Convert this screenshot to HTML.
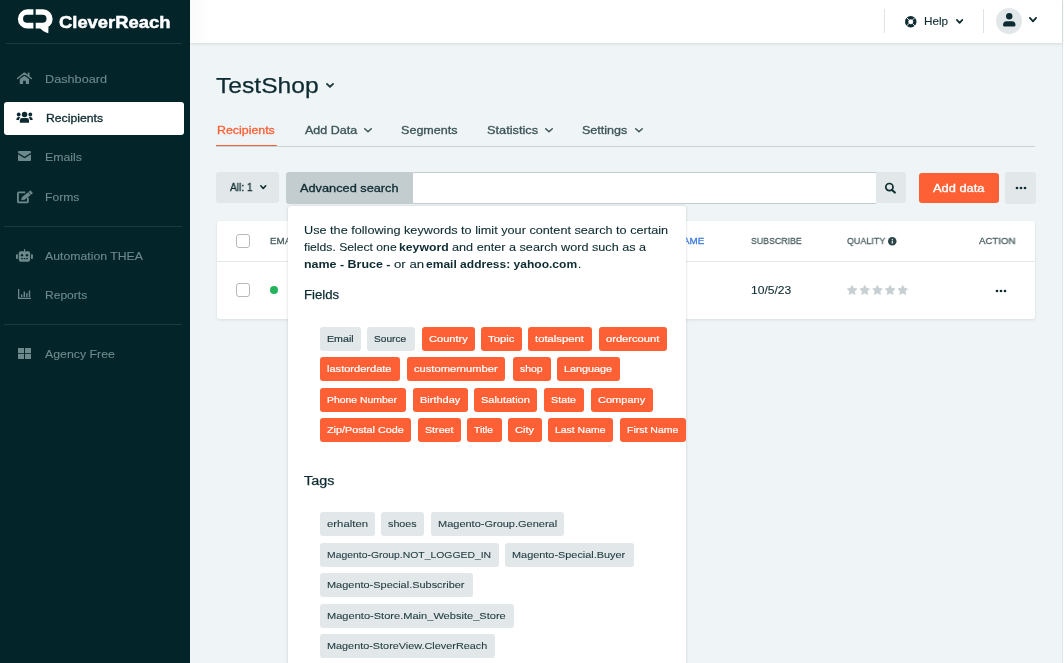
<!DOCTYPE html>
<html><head><meta charset="utf-8"><style>
html,body{margin:0;padding:0;width:1064px;height:663px;overflow:hidden;background:#eff4f6;}
body{position:relative;font-family:"Liberation Sans",sans-serif;}
.t{position:absolute;white-space:nowrap;line-height:1;transform-origin:0 0;will-change:transform;}
.r{position:absolute;}
</style></head><body>
<div class="r" style="left:0px;top:0px;width:190px;height:663px;background:#03252a;"></div>
<div class="r" style="left:6px;top:43px;width:176px;height:1px;background:#1d3a40;"></div>
<div class="r" style="left:4px;top:226px;width:178px;height:1px;background:#1d3a40;"></div>
<div class="r" style="left:4px;top:324px;width:178px;height:1px;background:#1d3a40;"></div>
<div class="r" style="left:4px;top:102px;width:180px;height:33px;background:#fff;border-radius:3px;"></div>
<svg class="r" style="left:0;top:0" width="60" height="40" viewBox="0 0 60 40">
<path fill="#fff" fill-rule="evenodd" d="M27.5 9.3 H43 A9.6 9.6 0 0 1 43 28.6 H27.5 A9.6 9.6 0 0 1 27.5 9.3 Z M27 14.8 H42.6 A3.95 3.95 0 0 1 42.6 22.7 H27 A3.95 3.95 0 0 1 27 14.8Z"/>
<rect x="33.4" y="8" width="2.3" height="22" fill="#03252a"/>
<path fill="#fff" d="M39.5 27.5 L48.5 27 L48.3 33.2 Q44 32.5 39.5 27.5Z"/>
</svg>
<div class="t" style="left:58.60px;top:14.00px;font-size:17px;font-weight:bold;color:#fff;transform:scaleX(1.0818);-webkit-text-stroke:0.5px #fff;">CleverReach</div>
<div class="t" style="left:45.30px;top:74.00px;font-size:11px;font-weight:normal;color:#6e898c;transform:scaleX(1.1527);-webkit-text-stroke:0.1px #6e898c;">Dashboard</div>
<div class="t" style="left:45.30px;top:152.00px;font-size:11px;font-weight:normal;color:#6e898c;transform:scaleX(1.1187);-webkit-text-stroke:0.1px #6e898c;">Emails</div>
<div class="t" style="left:45.30px;top:192.00px;font-size:11px;font-weight:normal;color:#6e898c;transform:scaleX(1.1041);-webkit-text-stroke:0.1px #6e898c;">Forms</div>
<div class="t" style="left:45.30px;top:251.00px;font-size:11px;font-weight:normal;color:#6e898c;transform:scaleX(1.1150);-webkit-text-stroke:0.1px #6e898c;">Automation THEA</div>
<div class="t" style="left:45.30px;top:290.00px;font-size:11px;font-weight:normal;color:#6e898c;transform:scaleX(1.0956);-webkit-text-stroke:0.1px #6e898c;">Reports</div>
<div class="t" style="left:45.30px;top:349.00px;font-size:11px;font-weight:normal;color:#6e898c;transform:scaleX(1.1199);-webkit-text-stroke:0.1px #6e898c;">Agency Free</div>
<div class="t" style="left:45.50px;top:113.00px;font-size:11px;font-weight:normal;color:#0d2b31;transform:scaleX(1.1103);-webkit-text-stroke:0.3px #0d2b31;">Recipients</div>
<div class="r" style="left:190px;top:0px;width:872px;height:663px;background:#eff4f6;"></div>
<div class="r" style="left:1062px;top:0px;width:1px;height:663px;background:#dfe5e8;"></div>
<div class="r" style="left:1063px;top:0px;width:1px;height:663px;background:#fff;"></div>
<div class="r" style="left:190px;top:0px;width:872px;height:43px;background:#fff;box-shadow:0 1px 3px rgba(0,30,40,.12);"></div>
<div class="r" style="left:190px;top:0px;width:22px;height:43px;background:linear-gradient(90deg,rgba(0,20,30,.025),rgba(0,20,30,0));"></div>
<div class="r" style="left:884px;top:9px;width:1px;height:24px;background:#dde3e6;"></div>
<div class="r" style="left:983px;top:9px;width:1px;height:24px;background:#dde3e6;"></div>
<div class="t" style="left:924.40px;top:16.00px;font-size:11px;font-weight:normal;color:#0d2b31;transform:scaleX(1.0661);-webkit-text-stroke:0.1px #0d2b31;">Help</div>
<div class="r" style="left:996px;top:7.75px;width:26px;height:26px;background:#e2e8ea;border-radius:50%;"></div>
<div class="t" style="left:215.90px;top:75.00px;font-size:22px;font-weight:normal;color:#0d2b31;transform:scaleX(1.1189);-webkit-text-stroke:0.25px #0d2b31;">TestShop</div>
<div class="r" style="left:216px;top:146px;width:819px;height:1px;background:#c9d2d5;"></div>
<div class="r" style="left:216px;top:145px;width:61px;height:1px;background:#fe6036;"></div>
<div class="t" style="left:217.00px;top:125.00px;font-size:11px;font-weight:normal;color:#fe6036;transform:scaleX(1.1257);-webkit-text-stroke:0.3px #fe6036;">Recipients</div>
<div class="t" style="left:304.80px;top:125.00px;font-size:11px;font-weight:normal;color:#3c5458;transform:scaleX(1.1370);-webkit-text-stroke:0.3px #3c5458;">Add Data</div>
<div class="t" style="left:401.10px;top:125.00px;font-size:11px;font-weight:normal;color:#3c5458;transform:scaleX(1.1429);-webkit-text-stroke:0.3px #3c5458;">Segments</div>
<div class="t" style="left:487.30px;top:125.00px;font-size:11px;font-weight:normal;color:#3c5458;transform:scaleX(1.1611);-webkit-text-stroke:0.3px #3c5458;">Statistics</div>
<div class="t" style="left:582.20px;top:125.00px;font-size:11px;font-weight:normal;color:#3c5458;transform:scaleX(1.1385);-webkit-text-stroke:0.3px #3c5458;">Settings</div>
<div class="r" style="left:216px;top:172px;width:63px;height:31px;background:#e2e8ea;border-radius:3px;"></div>
<div class="t" style="left:229.50px;top:182.00px;font-size:11px;font-weight:normal;color:#0d2b31;transform:scaleX(0.9283);-webkit-text-stroke:0.3px #0d2b31;">All: 1</div>
<div class="r" style="left:286px;top:172px;width:127px;height:32px;background:#c3cccf;border-radius:3px 0 0 3px;"></div>
<div class="t" style="left:299.90px;top:183.00px;font-size:11px;font-weight:normal;color:#0d2b31;transform:scaleX(1.1594);-webkit-text-stroke:0.3px #0d2b31;">Advanced search</div>
<div class="r" style="left:413px;top:172px;width:463px;height:32px;background:#fff;border-top:1px solid #c3cccf;border-bottom:1px solid #c3cccf;box-sizing:border-box;"></div>
<div class="r" style="left:876px;top:172px;width:30px;height:31px;background:#e2e8ea;border-radius:0 3px 3px 0;"></div>
<div class="r" style="left:919px;top:173px;width:80px;height:30px;background:#fe6036;border-radius:3px;"></div>
<div class="t" style="left:932.50px;top:183.00px;font-size:11px;font-weight:normal;color:#fff;transform:scaleX(1.1678);-webkit-text-stroke:0.3px #fff;">Add data</div>
<div class="r" style="left:1005px;top:172px;width:31px;height:32px;background:#e2e8ea;border-radius:3px;"></div>
<div class="r" style="left:217px;top:221px;width:818px;height:98px;background:#fff;box-shadow:0 1px 3px rgba(0,30,40,.10);border-radius:2px;"></div>
<div class="r" style="left:217px;top:261px;width:818px;height:1px;background:#e3e8ea;"></div>
<div class="r" style="left:236px;top:234px;width:14px;height:14px;background:#fff;border:1px solid #b5b9bb;border-radius:3px;box-sizing:border-box;"></div>
<div class="r" style="left:236px;top:283px;width:14px;height:14px;background:#fff;border:1px solid #b5b9bb;border-radius:3px;box-sizing:border-box;"></div>
<div class="r" style="left:269.5px;top:285.8px;width:8.3px;height:8.3px;background:#22b35b;border-radius:50%;"></div>
<div class="t" style="left:269.50px;top:236.00px;font-size:9.8px;font-weight:normal;color:#4a5f63;transform:scaleX(1.0000);-webkit-text-stroke:0.3px #4a5f63;">EMAIL</div>
<div class="t" style="left:676.00px;top:236.00px;font-size:9.8px;font-weight:normal;color:#3b7ddd;transform:scaleX(1.0000);-webkit-text-stroke:0.3px #3b7ddd;">NAME</div>
<div class="t" style="left:750.95px;top:236.00px;font-size:9.8px;font-weight:normal;color:#4a5f63;transform:scaleX(0.8968);-webkit-text-stroke:0.3px #4a5f63;">SUBSCRIBE</div>
<div class="t" style="left:846.70px;top:236.00px;font-size:9.8px;font-weight:normal;color:#4a5f63;transform:scaleX(0.9113);-webkit-text-stroke:0.3px #4a5f63;">QUALITY</div>
<div class="t" style="left:979.30px;top:236.00px;font-size:9.8px;font-weight:normal;color:#4a5f63;transform:scaleX(0.9837);-webkit-text-stroke:0.3px #4a5f63;">ACTION</div>
<div class="t" style="left:750.90px;top:285.00px;font-size:11.5px;font-weight:normal;color:#0d2b31;transform:scaleX(1.0491);-webkit-text-stroke:0.1px #0d2b31;">10/5/23</div>
<svg class="r" style="left:17px;top:72px;overflow:visible" width="15" height="12" viewBox="0 0 15 12"><path d="M0.5 6.5 L7.4 1.1 L14.4 6.5" fill="none" stroke="#6e898c" stroke-width="1.4" stroke-linecap="round" stroke-linejoin="round"/><rect x="10.8" y="0.6" width="1.7" height="3.6" fill="#6e898c"/><path fill="#6e898c" d="M2.8 6.9 L7.4 3.7 L12.06 6.9 V11.9 H8.8 V8.7 H6.1 V11.9 H2.8 Z"/></svg>
<svg class="r" style="left:16px;top:111px;overflow:visible" width="17" height="12" viewBox="0 0 17 12"><g fill="#0d2b31"><circle cx="8.55" cy="3.4" r="2.75"/><path d="M3.9 11.8 V9.3 Q3.9 7.05 6.1 7.05 H10.8 Q13 7.05 13 9.3 V11.8 Z"/><circle cx="2.7" cy="3.5" r="1.9"/><circle cx="14.3" cy="3.5" r="1.9"/><path d="M0.3 9 Q0.4 6.1 2.8 6.1 L4.4 6.3 Q3.1 7.4 3 9 Z"/><path d="M16.7 9 Q16.6 6.1 14.2 6.1 L12.6 6.3 Q13.9 7.4 14 9 Z"/></g></svg>
<svg class="r" style="left:18px;top:151px;overflow:visible" width="13" height="10" viewBox="0 0 13 10"><path fill="#6e898c" d="M1.2 0 H11.8 Q13 0 13 1.2 V1.8 L6.5 5.8 L0 1.8 V1.2 Q0 0 1.2 0Z M0 3.2 L6.5 7.2 L13 3.2 V8.8 Q13 10 11.8 10 H1.2 Q0 10 0 8.8Z"/></svg>
<svg class="r" style="left:17px;top:189.5px;overflow:visible" width="15" height="14" viewBox="0 0 15 14"><path d="M8.2 2.4 H1.9 Q0.9 2.4 0.9 3.4 V11.4 Q0.9 12.4 1.9 12.4 H9.9 Q10.9 12.4 10.9 11.4 V7.6" fill="none" stroke="#6e898c" stroke-width="1.8"/><path fill="#6e898c" stroke="#6e898c" stroke-width="0.3" stroke-linejoin="round" d="M4.30 9.90 L7.43 9.69 L15.67 3.28 L13.53 0.52 L5.28 6.92Z"/><path d="M13.80 5.11 L11.29 1.88" stroke="#03252a" stroke-width="0.6"/></svg>
<svg class="r" style="left:16px;top:249px;overflow:visible" width="17" height="13" viewBox="0 0 17 13"><g fill="#6e898c"><rect x="2.8" y="2.2" width="11.3" height="10.5" rx="2"/><rect x="8" y="0" width="1" height="2.5"/><rect x="0" y="5.3" width="1.9" height="4.6" rx="0.6"/><rect x="15" y="5.3" width="1.9" height="4.6" rx="0.6"/></g><g fill="#03252a"><circle cx="6" cy="6.3" r="1.2"/><circle cx="11" cy="6.3" r="1.2"/><rect x="5.2" y="9" width="1.6" height="1.2"/><rect x="7.7" y="9" width="1.6" height="1.2"/><rect x="10.2" y="9" width="1.6" height="1.2"/></g></svg>
<svg class="r" style="left:18px;top:289px;overflow:visible" width="13" height="10" viewBox="0 0 13 10"><g fill="#6e898c"><rect x="0" y="0" width="1.3" height="10"/><rect x="0" y="8.7" width="13" height="1.3"/><rect x="3" y="5.5" width="1.4" height="2.5"/><rect x="5.6" y="2.5" width="1.4" height="5.5"/><rect x="8.2" y="4" width="1.4" height="4"/><rect x="10.8" y="1.5" width="1.4" height="6.5"/></g></svg>
<svg class="r" style="left:18px;top:348px;overflow:visible" width="13" height="11" viewBox="0 0 13 11"><g fill="#6e898c"><rect x="0" y="0" width="6" height="5.2"/><rect x="7" y="0" width="6" height="5.2"/><rect x="0" y="6" width="6" height="5"/><rect x="7" y="6" width="6" height="5"/></g></svg>
<svg class="r" style="left:905px;top:16px;overflow:visible" width="11.5" height="11.5" viewBox="0 0 11.5 11.5"><circle cx="5.75" cy="5.75" r="4.0" fill="none" stroke="#0d2b31" stroke-width="3.5"/><circle cx="5.75" cy="5.75" r="2.1" fill="none" stroke="#fff" stroke-width="0.6"/><g stroke="#fff" stroke-width="0.9"><path d="M1.6 1.6 L4.0 4.0 M9.9 1.6 L7.5 4.0 M1.6 9.9 L4.0 7.5 M9.9 9.9 L7.5 7.5"/></g></svg>
<svg class="r" style="left:955px;top:17.5px;overflow:visible" width="9.200000000000045" height="6.699999999999999" viewBox="0 0 9.200000000000045 6.699999999999999"><path d="M1.85 1.85 L4.600000000000023 4.85 L7.350000000000046 1.85" fill="none" stroke="#0d2b31" stroke-width="1.7" stroke-linecap="round" stroke-linejoin="round"/></svg>
<svg class="r" style="left:1003px;top:12.5px;overflow:visible" width="12.5" height="13.5" viewBox="0 0 12.5 13.5"><g fill="#0d2b31"><circle cx="6.25" cy="3.3" r="3.2"/><path d="M0 12 Q0 8.2 3.5 8.2 H9 Q12.5 8.2 12.5 12 Q12.5 13.5 11 13.5 H1.5 Q0 13.5 0 12Z"/></g></svg>
<svg class="r" style="left:1027.5px;top:15.600000000000001px;overflow:visible" width="10.0" height="7.199999999999999" viewBox="0 0 10.0 7.199999999999999"><path d="M1.9 1.9 L5.0 5.299999999999999 L8.1 1.9" fill="none" stroke="#0d2b31" stroke-width="1.8" stroke-linecap="round" stroke-linejoin="round"/></svg>
<svg class="r" style="left:325px;top:82px;overflow:visible" width="10" height="6.900000000000006" viewBox="0 0 10 6.900000000000006"><path d="M1.95 1.95 L5.0 4.9500000000000055 L8.05 1.95" fill="none" stroke="#1f3b40" stroke-width="1.9" stroke-linecap="round" stroke-linejoin="round"/></svg>
<svg class="r" style="left:363px;top:127px;overflow:visible" width="10" height="6.5" viewBox="0 0 10 6.5"><path d="M1.75 1.75 L5.0 4.75 L8.25 1.75" fill="none" stroke="#3c5458" stroke-width="1.5" stroke-linecap="round" stroke-linejoin="round"/></svg>
<svg class="r" style="left:544px;top:127px;overflow:visible" width="10" height="6.5" viewBox="0 0 10 6.5"><path d="M1.75 1.75 L5.0 4.75 L8.25 1.75" fill="none" stroke="#3c5458" stroke-width="1.5" stroke-linecap="round" stroke-linejoin="round"/></svg>
<svg class="r" style="left:633.5px;top:127px;overflow:visible" width="10.0" height="6.5" viewBox="0 0 10.0 6.5"><path d="M1.75 1.75 L5.0 4.75 L8.25 1.75" fill="none" stroke="#3c5458" stroke-width="1.5" stroke-linecap="round" stroke-linejoin="round"/></svg>
<svg class="r" style="left:258.5px;top:183.5px;overflow:visible" width="8.5" height="6.300000000000011" viewBox="0 0 8.5 6.300000000000011"><path d="M1.8 1.8 L4.25 4.5000000000000115 L6.7 1.8" fill="none" stroke="#0d2b31" stroke-width="1.6" stroke-linecap="round" stroke-linejoin="round"/></svg>
<svg class="r" style="left:885px;top:182.5px;overflow:visible" width="11" height="10.5" viewBox="0 0 11 10.5"><circle cx="4.4" cy="4.1" r="3.6" fill="none" stroke="#0d2b31" stroke-width="1.7"/><path d="M7 6.9 L9.9 9.6" stroke="#0d2b31" stroke-width="2" stroke-linecap="round"/></svg>
<svg class="r" style="left:1014.7px;top:185.8px;overflow:visible" width="12" height="4" viewBox="0 0 12 4"><circle cx="2" cy="2" r="1.35" fill="#0d2b31"/><circle cx="6" cy="2" r="1.35" fill="#0d2b31"/><circle cx="10" cy="2" r="1.35" fill="#0d2b31"/></svg>
<svg class="r" style="left:995px;top:288.5px;overflow:visible" width="12" height="4" viewBox="0 0 12 4"><circle cx="2" cy="2" r="1.35" fill="#0d2b31"/><circle cx="6" cy="2" r="1.35" fill="#0d2b31"/><circle cx="10" cy="2" r="1.35" fill="#0d2b31"/></svg>
<svg class="r" style="left:847px;top:285px;overflow:visible" width="62" height="10" viewBox="0 0 62 10"><path fill="#c6cfd1" stroke="#c6cfd1" stroke-width="0.8" stroke-linejoin="round" d="M5.10 0.40 L6.60 3.34 L9.86 3.85 L7.53 6.19 L8.04 9.45 L5.10 7.95 L2.16 9.45 L2.67 6.19 L0.34 3.85 L3.60 3.34Z"/><path fill="#c6cfd1" stroke="#c6cfd1" stroke-width="0.8" stroke-linejoin="round" d="M17.77 0.40 L19.27 3.34 L22.53 3.85 L20.20 6.19 L20.71 9.45 L17.77 7.95 L14.83 9.45 L15.34 6.19 L13.01 3.85 L16.27 3.34Z"/><path fill="#c6cfd1" stroke="#c6cfd1" stroke-width="0.8" stroke-linejoin="round" d="M30.44 0.40 L31.94 3.34 L35.20 3.85 L32.87 6.19 L33.38 9.45 L30.44 7.95 L27.50 9.45 L28.01 6.19 L25.68 3.85 L28.94 3.34Z"/><path fill="#c6cfd1" stroke="#c6cfd1" stroke-width="0.8" stroke-linejoin="round" d="M43.11 0.40 L44.61 3.34 L47.87 3.85 L45.54 6.19 L46.05 9.45 L43.11 7.95 L40.17 9.45 L40.68 6.19 L38.35 3.85 L41.61 3.34Z"/><path fill="#c6cfd1" stroke="#c6cfd1" stroke-width="0.8" stroke-linejoin="round" d="M55.78 0.40 L57.28 3.34 L60.54 3.85 L58.21 6.19 L58.72 9.45 L55.78 7.95 L52.84 9.45 L53.35 6.19 L51.02 3.85 L54.28 3.34Z"/></svg>
<svg class="r" style="left:888.3px;top:236.6px;overflow:visible" width="8.5" height="8.5" viewBox="0 0 8.5 8.5"><circle cx="4.25" cy="4.25" r="4.25" fill="#2c4448"/><rect x="3.75" y="3.6" width="1.1" height="3" fill="#fff"/><circle cx="4.3" cy="2.3" r="0.65" fill="#fff"/></svg>
<div class="r" style="left:288px;top:206px;width:398px;height:470px;background:#fff;border-radius:3px;box-shadow:0 0 3px rgba(0,30,40,.18);"></div>
<div class="t" style="left:303.50px;top:225.00px;font-size:11.2px;font-weight:normal;color:#0d2b31;transform:scaleX(1.1328);-webkit-text-stroke:0.1px #0d2b31;">Use the following keywords to limit your content search to certain</div>
<div class="t" style="left:303.90px;top:242.00px;font-size:11.2px;font-weight:normal;color:#0d2b31;transform:scaleX(1.0874);-webkit-text-stroke:0.1px #0d2b31;">fields. Select one</div>
<div class="t" style="left:399.40px;top:242.00px;font-size:11.2px;font-weight:bold;color:#0d2b31;transform:scaleX(1.0940);">keyword</div>
<div class="t" style="left:451.70px;top:242.00px;font-size:11.2px;font-weight:normal;color:#0d2b31;transform:scaleX(1.1310);-webkit-text-stroke:0.1px #0d2b31;">and enter a search word such as a</div>
<div class="t" style="left:303.90px;top:259.00px;font-size:11.2px;font-weight:bold;color:#0d2b31;transform:scaleX(1.1133);">name - Bruce -</div>
<div class="t" style="left:393.70px;top:259.00px;font-size:11.2px;font-weight:normal;color:#0d2b31;transform:scaleX(1.1822);-webkit-text-stroke:0.1px #0d2b31;">or an</div>
<div class="t" style="left:425.70px;top:259.00px;font-size:11.2px;font-weight:bold;color:#0d2b31;transform:scaleX(1.0753);">email address: yahoo.com</div>
<div class="t" style="left:578.20px;top:259.00px;font-size:11.2px;font-weight:normal;color:#0d2b31;transform:scaleX(1.0000);-webkit-text-stroke:0.1px #0d2b31;">.</div>
<div class="t" style="left:304.20px;top:289.00px;font-size:12.5px;font-weight:normal;color:#0d2b31;transform:scaleX(1.0534);-webkit-text-stroke:0.25px #0d2b31;">Fields</div>
<div class="t" style="left:303.80px;top:475.00px;font-size:12.5px;font-weight:normal;color:#0d2b31;transform:scaleX(1.1498);-webkit-text-stroke:0.25px #0d2b31;">Tags</div>
<div class="r" style="left:320px;top:327px;width:41px;height:24px;background:#e2e8ea;border-radius:3px;"></div>
<div class="t" style="left:326.80px;top:334.00px;font-size:9.8px;font-weight:normal;color:#1f3a3f;transform:scaleX(1.0886);-webkit-text-stroke:0.2px #1f3a3f;">Email</div>
<div class="r" style="left:367px;top:327px;width:48px;height:24px;background:#e2e8ea;border-radius:3px;"></div>
<div class="t" style="left:373.80px;top:334.00px;font-size:9.8px;font-weight:normal;color:#1f3a3f;transform:scaleX(1.0347);-webkit-text-stroke:0.2px #1f3a3f;">Source</div>
<div class="r" style="left:422px;top:327px;width:53px;height:24px;background:#fe6036;border-radius:3px;"></div>
<div class="t" style="left:428.60px;top:334.00px;font-size:9.8px;font-weight:normal;color:#fff;transform:scaleX(1.1306);-webkit-text-stroke:0.2px #fff;">Country</div>
<div class="r" style="left:481px;top:327px;width:41px;height:24px;background:#fe6036;border-radius:3px;"></div>
<div class="t" style="left:487.60px;top:334.00px;font-size:9.8px;font-weight:normal;color:#fff;transform:scaleX(1.1498);-webkit-text-stroke:0.2px #fff;">Topic</div>
<div class="r" style="left:528px;top:327px;width:64px;height:24px;background:#fe6036;border-radius:3px;"></div>
<div class="t" style="left:534.60px;top:334.00px;font-size:9.8px;font-weight:normal;color:#fff;transform:scaleX(1.1522);-webkit-text-stroke:0.2px #fff;">totalspent</div>
<div class="r" style="left:599px;top:327px;width:68px;height:24px;background:#fe6036;border-radius:3px;"></div>
<div class="t" style="left:605.50px;top:334.00px;font-size:9.8px;font-weight:normal;color:#fff;transform:scaleX(1.1370);-webkit-text-stroke:0.2px #fff;">ordercount</div>
<div class="r" style="left:320px;top:357px;width:80px;height:24px;background:#fe6036;border-radius:3px;"></div>
<div class="t" style="left:326.80px;top:364.00px;font-size:9.8px;font-weight:normal;color:#fff;transform:scaleX(1.1282);-webkit-text-stroke:0.2px #fff;">lastorderdate</div>
<div class="r" style="left:407px;top:357px;width:98px;height:24px;background:#fe6036;border-radius:3px;"></div>
<div class="t" style="left:413.60px;top:364.00px;font-size:9.8px;font-weight:normal;color:#fff;transform:scaleX(1.1384);-webkit-text-stroke:0.2px #fff;">customernumber</div>
<div class="r" style="left:513px;top:357px;width:38px;height:24px;background:#fe6036;border-radius:3px;"></div>
<div class="t" style="left:519.50px;top:364.00px;font-size:9.8px;font-weight:normal;color:#fff;transform:scaleX(1.0645);-webkit-text-stroke:0.2px #fff;">shop</div>
<div class="r" style="left:557px;top:357px;width:63px;height:24px;background:#fe6036;border-radius:3px;"></div>
<div class="t" style="left:563.50px;top:364.00px;font-size:9.8px;font-weight:normal;color:#fff;transform:scaleX(1.1007);-webkit-text-stroke:0.2px #fff;">Language</div>
<div class="r" style="left:320px;top:388px;width:86px;height:24px;background:#fe6036;border-radius:3px;"></div>
<div class="t" style="left:326.80px;top:395.00px;font-size:9.8px;font-weight:normal;color:#fff;transform:scaleX(1.0630);-webkit-text-stroke:0.2px #fff;">Phone Number</div>
<div class="r" style="left:413px;top:388px;width:55px;height:24px;background:#fe6036;border-radius:3px;"></div>
<div class="t" style="left:419.70px;top:395.00px;font-size:9.8px;font-weight:normal;color:#fff;transform:scaleX(1.1204);-webkit-text-stroke:0.2px #fff;">Birthday</div>
<div class="r" style="left:474px;top:388px;width:63px;height:24px;background:#fe6036;border-radius:3px;"></div>
<div class="t" style="left:480.60px;top:395.00px;font-size:9.8px;font-weight:normal;color:#fff;transform:scaleX(1.1190);-webkit-text-stroke:0.2px #fff;">Salutation</div>
<div class="r" style="left:544px;top:388px;width:40px;height:24px;background:#fe6036;border-radius:3px;"></div>
<div class="t" style="left:550.80px;top:395.00px;font-size:9.8px;font-weight:normal;color:#fff;transform:scaleX(1.0969);-webkit-text-stroke:0.2px #fff;">State</div>
<div class="r" style="left:591px;top:388px;width:62px;height:24px;background:#fe6036;border-radius:3px;"></div>
<div class="t" style="left:597.80px;top:395.00px;font-size:9.8px;font-weight:normal;color:#fff;transform:scaleX(1.1247);-webkit-text-stroke:0.2px #fff;">Company</div>
<div class="r" style="left:320px;top:418px;width:91px;height:24px;background:#fe6036;border-radius:3px;"></div>
<div class="t" style="left:326.80px;top:425.00px;font-size:9.8px;font-weight:normal;color:#fff;transform:scaleX(1.1004);-webkit-text-stroke:0.2px #fff;">Zip/Postal Code</div>
<div class="r" style="left:418px;top:418px;width:43px;height:24px;background:#fe6036;border-radius:3px;"></div>
<div class="t" style="left:424.80px;top:425.00px;font-size:9.8px;font-weight:normal;color:#fff;transform:scaleX(1.0895);-webkit-text-stroke:0.2px #fff;">Street</div>
<div class="r" style="left:467px;top:418px;width:35px;height:24px;background:#fe6036;border-radius:3px;"></div>
<div class="t" style="left:474.10px;top:425.00px;font-size:9.8px;font-weight:normal;color:#fff;transform:scaleX(1.0481);-webkit-text-stroke:0.2px #fff;">Title</div>
<div class="r" style="left:508px;top:418px;width:34px;height:24px;background:#fe6036;border-radius:3px;"></div>
<div class="t" style="left:514.90px;top:425.00px;font-size:9.8px;font-weight:normal;color:#fff;transform:scaleX(1.1257);-webkit-text-stroke:0.2px #fff;">City</div>
<div class="r" style="left:548px;top:418px;width:65px;height:24px;background:#fe6036;border-radius:3px;"></div>
<div class="t" style="left:554.60px;top:425.00px;font-size:9.8px;font-weight:normal;color:#fff;transform:scaleX(1.0650);-webkit-text-stroke:0.2px #fff;">Last Name</div>
<div class="r" style="left:620px;top:418px;width:66px;height:24px;background:#fe6036;border-radius:3px;"></div>
<div class="t" style="left:626.70px;top:425.00px;font-size:9.8px;font-weight:normal;color:#fff;transform:scaleX(1.0734);-webkit-text-stroke:0.2px #fff;">First Name</div>
<div class="r" style="left:320px;top:512px;width:55px;height:24px;background:#e2e8ea;border-radius:3px;"></div>
<div class="t" style="left:326.70px;top:519.00px;font-size:9.8px;font-weight:normal;color:#1f3a3f;transform:scaleX(1.1585);-webkit-text-stroke:0.1px #1f3a3f;">erhalten</div>
<div class="r" style="left:381px;top:512px;width:43px;height:24px;background:#e2e8ea;border-radius:3px;"></div>
<div class="t" style="left:387.70px;top:519.00px;font-size:9.8px;font-weight:normal;color:#1f3a3f;transform:scaleX(1.0973);-webkit-text-stroke:0.1px #1f3a3f;">shoes</div>
<div class="r" style="left:431px;top:512px;width:133px;height:24px;background:#e2e8ea;border-radius:3px;"></div>
<div class="t" style="left:437.50px;top:519.00px;font-size:9.8px;font-weight:normal;color:#1f3a3f;transform:scaleX(1.1220);-webkit-text-stroke:0.1px #1f3a3f;">Magento-Group.General</div>
<div class="r" style="left:320px;top:543px;width:179px;height:24px;background:#e2e8ea;border-radius:3px;"></div>
<div class="t" style="left:326.70px;top:550.00px;font-size:9.8px;font-weight:normal;color:#1f3a3f;transform:scaleX(1.0614);-webkit-text-stroke:0.1px #1f3a3f;">Magento-Group.NOT_LOGGED_IN</div>
<div class="r" style="left:505px;top:543px;width:129px;height:24px;background:#e2e8ea;border-radius:3px;"></div>
<div class="t" style="left:511.70px;top:550.00px;font-size:9.8px;font-weight:normal;color:#1f3a3f;transform:scaleX(1.1120);-webkit-text-stroke:0.1px #1f3a3f;">Magento-Special.Buyer</div>
<div class="r" style="left:320px;top:573px;width:153px;height:24px;background:#e2e8ea;border-radius:3px;"></div>
<div class="t" style="left:326.70px;top:580.00px;font-size:9.8px;font-weight:normal;color:#1f3a3f;transform:scaleX(1.1172);-webkit-text-stroke:0.1px #1f3a3f;">Magento-Special.Subscriber</div>
<div class="r" style="left:320px;top:604px;width:194px;height:24px;background:#e2e8ea;border-radius:3px;"></div>
<div class="t" style="left:326.70px;top:611.00px;font-size:9.8px;font-weight:normal;color:#1f3a3f;transform:scaleX(1.1292);-webkit-text-stroke:0.1px #1f3a3f;">Magento-Store.Main_Website_Store</div>
<div class="r" style="left:320px;top:634px;width:175px;height:24px;background:#e2e8ea;border-radius:3px;"></div>
<div class="t" style="left:326.70px;top:641.00px;font-size:9.8px;font-weight:normal;color:#1f3a3f;transform:scaleX(1.1078);-webkit-text-stroke:0.1px #1f3a3f;">Magento-StoreView.CleverReach</div>
</body></html>
